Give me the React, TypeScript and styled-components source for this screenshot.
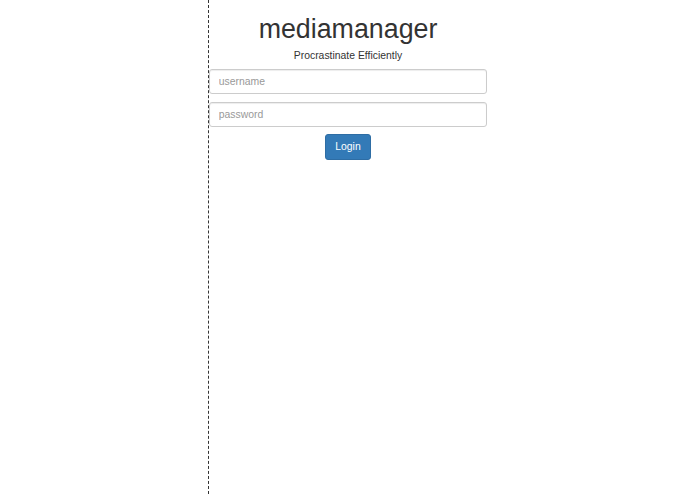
import React from "react";
import styled, { createGlobalStyle } from "styled-components";

const GlobalStyle = createGlobalStyle`
    html, body {
        margin: 0;
        padding: 0;
        background: #fff;
    }
    body {
        font-family: "Liberation Sans", Arial, Helvetica, sans-serif;
        color: #333;
    }
`;

const Page = styled.div`
    display: flex;
    min-height: 100vh;
`;

const Gutter = styled.div`
    width: 208px;
    flex-shrink: 0;
`;

const Panel = styled.div`
    width: 278px;
    min-height: 100vh;
    border-left: 1px dashed #333;
    display: flex;
    flex-direction: column;
    align-items: stretch;
`;

const Title = styled.h1`
    margin: 14.5px 0 0;
    font-size: 26.8px;
    line-height: 1.1;
    font-weight: 500;
    text-align: center;
    color: #333;
`;

const Tagline = styled.p`
    margin: 5px 0 5px;
    font-size: 10.4px;
    line-height: 14.7px;
    text-align: center;
    color: #333;
`;

const Form = styled.form`
    display: flex;
    flex-direction: column;
    gap: 8px;
    margin: 0;
`;

const Field = styled.input`
    box-sizing: border-box;
    width: 278px;
    height: 25px;
    margin: 0;
    padding: 0 8.8px;
    font-family: inherit;
    font-size: 10.4px;
    color: #555;
    background: #fff;
    border: 1px solid #ccc;
    border-radius: 3px;
    box-shadow: inset 0 1px 1px rgba(0, 0, 0, 0.075);
    outline: none;

    &::placeholder {
        color: #999;
    }
`;

const Actions = styled.div`
    display: flex;
    justify-content: center;
    margin-top: -1px;
`;

const Button = styled.button`
    box-sizing: border-box;
    width: 46px;
    height: 26px;
    padding: 0;
    font-family: inherit;
    font-size: 10.4px;
    color: #fff;
    background: #337ab7;
    border: 1px solid #2e6da4;
    border-radius: 3px;
    cursor: pointer;
`;

export default function App() {
    return (
        <>
            <GlobalStyle/>
            <Page>
                <Gutter/>
                <Panel>
                    <Title>mediamanager</Title>
                    <Tagline>Procrastinate Efficiently</Tagline>
                    <Form onSubmit={(e) => e.preventDefault()}>
                        <Field type="text" placeholder="username"/>
                        <Field type="password" placeholder="password"/>
                        <Actions>
                            <Button type="submit">Login</Button>
                        </Actions>
                    </Form>
                </Panel>
            </Page>
        </>
    );
}
